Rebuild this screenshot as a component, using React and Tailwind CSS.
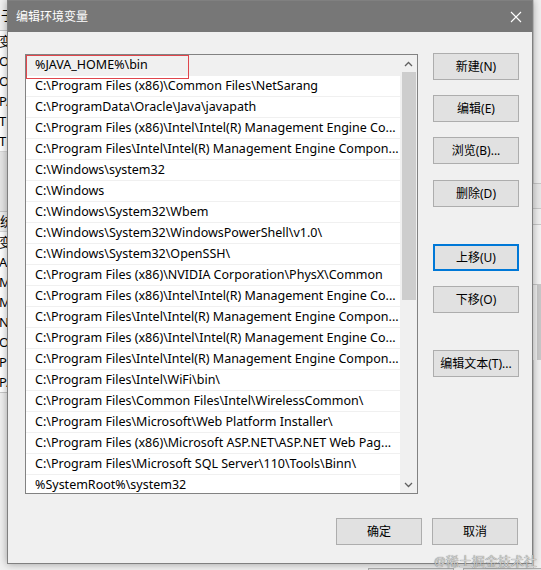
import React from "react"

const paths = [
    "%JAVA_HOME%\\bin",
    "C:\\Program Files (x86)\\Common Files\\NetSarang",
    "C:\\ProgramData\\Oracle\\Java\\javapath",
    "C:\\Program Files (x86)\\Intel\\Intel(R) Management Engine Co...",
    "C:\\Program Files\\Intel\\Intel(R) Management Engine Compon...",
    "C:\\Windows\\system32",
    "C:\\Windows",
    "C:\\Windows\\System32\\Wbem",
    "C:\\Windows\\System32\\WindowsPowerShell\\v1.0\\",
    "C:\\Windows\\System32\\OpenSSH\\",
    "C:\\Program Files (x86)\\NVIDIA Corporation\\PhysX\\Common",
    "C:\\Program Files (x86)\\Intel\\Intel(R) Management Engine Co...",
    "C:\\Program Files\\Intel\\Intel(R) Management Engine Compon...",
    "C:\\Program Files (x86)\\Intel\\Intel(R) Management Engine Co...",
    "C:\\Program Files\\Intel\\Intel(R) Management Engine Compon...",
    "C:\\Program Files\\Intel\\WiFi\\bin\\",
    "C:\\Program Files\\Common Files\\Intel\\WirelessCommon\\",
    "C:\\Program Files\\Microsoft\\Web Platform Installer\\",
    "C:\\Program Files (x86)\\Microsoft ASP.NET\\ASP.NET Web Pag...",
    "C:\\Program Files\\Microsoft SQL Server\\110\\Tools\\Binn\\",
    "%SystemRoot%\\system32",
]

// strip of the window behind, clipped at the left edge
const leftTop = ["子", "变", "O", "O", "PA", "TE", "TM"]
const leftBottom = ["统", "变", "A", "M", "M", "N", "O", "Pa", "PA"]

function WinButton({ label, focused, className = "" }) {
    return (
        <button
            className={`w-[86px] h-[27px] flex items-center justify-center text-[12px] text-black bg-[#e1e1e1] ${
                focused ? "border-2 border-[#0078d7]" : "border border-[#adadad]"
            } ${className}`}
        >
            {label}
        </button>
    )
}

function Chevron({ down }) {
    return (
        <svg width="9" height="6" viewBox="0 0 9 6" className={down ? "rotate-180" : ""}>
            <path d="M1 5 L4.5 1.5 L8 5" fill="none" stroke="#606060" strokeWidth="1.3" />
        </svg>
    )
}

export default function App() {
    return (
        <div
            className="relative w-[541px] h-[570px] overflow-hidden bg-[#f0f0f0] text-black"
            style={{ fontFamily: '"Noto Sans", "Noto Sans CJK SC", sans-serif' }}
        >
            {/* window behind the dialog */}
            <div className="absolute left-0 top-0 w-[9px] h-[570px] overflow-hidden text-[13px] leading-none">
                <div className="h-[31px] border-b border-[#c8c8c8] flex items-center pl-[1px]">{leftTop[0]}</div>
                <div className="bg-white border-b border-[#d8d8d8]">
                    {leftTop.slice(1).map((t, i) => (
                        <div key={i} className="h-[20px] flex items-center -ml-[1px]">
                            {t}
                        </div>
                    ))}
                </div>
                <div className="h-[60px] bg-[#e6e6e6] border-b border-[#c8c8c8]" />
                <div className="h-[20px] flex items-center border-b border-[#d8d8d8]">{leftBottom[0]}</div>
                <div className="bg-white">
                    {leftBottom.slice(1).map((t, i) => (
                        <div key={i} className="h-[20px] flex items-center -ml-[1px]">
                            {t}
                        </div>
                    ))}
                </div>
                <div className="h-[20px] border-t border-[#c8c8c8]" />
            </div>
            <div className="absolute right-0 top-0 w-[8px] h-[570px] flex flex-col">
                <div className="h-[183px] border-l border-[#d0d0d0] bg-[#f0f0f0]" />
                <div className="h-[26px] border-y border-[#c8c8c8] bg-[#e8e8e8]" />
                <div className="h-[16px] border-b border-[#c8c8c8]" />
                <div className="h-[60px] border-b border-[#c8c8c8] bg-[#f4f4f4]" />
                <div className="h-[75px] flex justify-end">
                    <div className="w-[4px] bg-[#c8c8c8]" />
                </div>
                <div className="flex-1 border-l border-[#d0d0d0]" />
            </div>
            <div className="absolute left-[368px] top-[568px] w-[86px] h-[10px] border border-[#adadad] bg-[#e1e1e1]" />
            <div className="absolute left-[463px] top-[568px] w-[86px] h-[10px] border border-[#adadad] bg-[#e1e1e1]" />

            {/* the dialog */}
            <div className="absolute left-[7px] top-0 w-[526px] h-[564px] bg-[#f0f0f0] border border-[#808080] shadow-[0_0_8px_rgba(0,0,0,0.35)] flex flex-col">
                <div className="h-[31px] bg-[#777777] flex items-center justify-between pl-[8px] pr-[10px] text-white text-[12px]">
                    <span>编辑环境变量</span>
                    <svg width="12" height="12" viewBox="0 0 12 12">
                        <path d="M1 1 L11 11 M11 1 L1 11" stroke="#ffffff" strokeWidth="1.1" />
                    </svg>
                </div>

                <div className="flex pl-[17px] pt-[22px] gap-[15px]">
                    {/* path list */}
                    <div className="relative w-[393px] h-[440px] bg-white border border-[#828282] flex overflow-hidden">
                        <div className="flex-1 text-[12.5px]">
                            {paths.map((p, i) => (
                                <div
                                    key={i}
                                    className={`h-[21px] flex items-center pl-[9px] whitespace-nowrap border-b border-[#f0f0f0] ${
                                        i === 0 ? "bg-[#f0f0f0]" : ""
                                    }`}
                                >
                                    {p}
                                </div>
                            ))}
                        </div>
                        <div className="w-[17px] bg-[#f0f0f0] flex flex-col items-center">
                            <div className="h-[17px] flex items-center justify-center">
                                <Chevron />
                            </div>
                            <div className="w-[14px] h-[228px] bg-[#cdcdcd]" />
                            <div className="flex-1" />
                            <div className="h-[17px] flex items-center justify-center">
                                <Chevron down />
                            </div>
                        </div>
                        {/* red annotation box */}
                        <div className="absolute left-0 top-0 w-[163px] h-[24px] border border-[#e0464c]" />
                    </div>

                    {/* side buttons */}
                    <div className="flex flex-col -mt-[1px]">
                        <WinButton label="新建(N)" />
                        <WinButton label="编辑(E)" className="mt-[15px]" />
                        <WinButton label="浏览(B)..." className="mt-[15px]" />
                        <WinButton label="删除(D)" className="mt-[16px]" />
                        <WinButton label="上移(U)" focused className="mt-[37px]" />
                        <WinButton label="下移(O)" className="mt-[15px]" />
                        <WinButton label="编辑文本(T)..." className="mt-[37px]" />
                    </div>
                </div>

                <div className="flex justify-end gap-[10px] pr-[14px] mt-[24px]">
                    <WinButton label="确定" />
                    <WinButton label="取消" />
                </div>
            </div>

            <div className="absolute left-[434px] top-[552px] text-[13px] text-[#cfcfcf] [text-shadow:0_0_1px_#555]">
                @稀土掘金技术社区
            </div>
        </div>
    )
}
